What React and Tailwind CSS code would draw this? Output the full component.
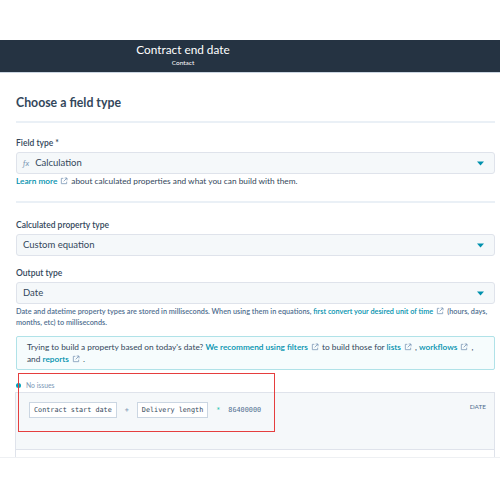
import React from 'react';

function ExtIcon() {
  return (
    <svg viewBox="0 0 12 12" className="inline-block w-[8px] h-[8px] mx-[3px] align-[-1px]" fill="none" stroke="#7c98b6" strokeWidth="1.2">
      <path d="M5 2H2v8h8V7" />
      <path d="M7 1.5h3.5V5M10.5 1.5 5.5 6.5" />
    </svg>
  );
}

function Caret() {
  return (
    <svg viewBox="0 0 10 6" className="w-[7px] h-[5px]">
      <path d="M0 0h10L5 6z" fill="#0091ae" />
    </svg>
  );
}

function Select({ children }) {
  return (
    <div className="h-[22px] flex items-center justify-between px-[6px] pr-[10px] bg-[#f5f8fa] border border-[#dfe3eb] rounded-[3px] text-[9.5px] text-[#33475b]">
      <div className="flex items-center">{children}</div>
      <Caret />
    </div>
  );
}

function Label({ children }) {
  return <div className="text-[8.5px] leading-[13px] font-semibold text-[#33475b] mb-[2px]">{children}</div>;
}

function Link({ children }) {
  return <span className="text-[#0091ae] font-semibold">{children}</span>;
}

export default function App() {
  return (
    <div className="w-[500px] h-[500px] bg-white overflow-hidden font-['Lato',sans-serif] text-[#33475b]">
      <div className="h-[40px]" />
      <div className="h-[33px] bg-[#253342] border-b border-[#cbd6e2] flex flex-col items-center pr-[134px] pt-[1px]">
        <div className="text-[11.8px] text-white leading-[17px]">Contract end date</div>
        <div className="text-[6.5px] text-white leading-[10px]">Contact</div>
      </div>

      <div className="px-[16px] pr-[5px]">
        <div className="pt-[21px] pb-[9px] text-[12.3px] font-bold text-[#33475b] leading-[18px]">Choose a field type</div>
        <div className="h-[2px] bg-[#eaf0f6]" />

        <div className="pt-[14px]">
          <Label>Field type *</Label>
          <Select>
            <span className="italic text-[#7c98b6] text-[8px] mr-[6px]">ƒx</span>
            Calculation
          </Select>
          <p className="text-[8.3px] leading-[12px] mt-[1px] text-[#33475b]">
            <Link>Learn more</Link>
            <ExtIcon />
            about calculated properties and what you can build with them.
          </p>
        </div>

        <div className="h-[2px] bg-[#eaf0f6] mt-[14px]" />

        <div className="pt-[16px]">
          <Label>Calculated property type</Label>
          <Select>Custom equation</Select>
        </div>

        <div className="pt-[11px]">
          <Label>Output type</Label>
          <Select>Date</Select>
          <p className="text-[7.3px] leading-[11px] mt-[2px] text-[#516f90] font-semibold">
            Date and datetime property types are stored in milliseconds. When using them in equations,{' '}
            <Link>first convert your desired unit of time</Link>
            <ExtIcon />
            (hours, days, months, etc) to milliseconds.
          </p>
        </div>

        <p className="mt-[8px] border border-[#b0e2e8] bg-[#f6fcfd] rounded-[2px] px-[10px] py-[4px] text-[8.3px] leading-[12px] text-[#33475b]">
          Trying to build a property based on today's date? <Link>We recommend using filters</Link>
          <ExtIcon />
          to build those for <Link>lists</Link>
          <ExtIcon />, <Link>workflows</Link>
          <ExtIcon />, and <Link>reports</Link>
          <ExtIcon />.
        </p>
      </div>

      <div className="relative mt-[9px] ml-[15px] mr-[5px]">
        <div className="flex items-center h-[12px]">
          <span className="w-[5px] h-[5px] rounded-full bg-[#00a4bd] ml-[1px]" />
          <span className="ml-[5px] text-[6.8px] text-[#7c98b6]">No issues</span>
        </div>
        <div className="border-l border-r border-[#dfe3eb]">
          <div className="mt-[1px] h-[58px] bg-[#f5f8fa] border-t border-b border-[#dfe3eb] flex justify-between pl-[13px] pr-[8px] pt-[9px]">
            <div className="flex items-start gap-[8px] font-['DejaVu_Sans_Mono',monospace] text-[6.8px] text-[#33475b]">
              <span className="bg-white border border-[#cbd6e2] px-[4px] py-[2px]">Contract start date</span>
              <span className="text-[#7c98b6] pt-[3px]">+</span>
              <span className="bg-white border border-[#cbd6e2] px-[4px] py-[2px]">Delivery length</span>
              <span className="text-[#00bda5] pt-[3px]">*</span>
              <span className="pt-[3px] text-[#516f90]">86400000</span>
            </div>
            <div className="text-[6.5px] text-[#516f90]">DATE</div>
          </div>
          <div className="h-[7px] bg-white" />
        </div>
        <div className="absolute left-[3px] top-[-6px] w-[257px] h-[59px] border border-[#e53e3e]" />
      </div>
      <div className="h-[1px] bg-[#eef0f3]" />
    </div>
  );
}
